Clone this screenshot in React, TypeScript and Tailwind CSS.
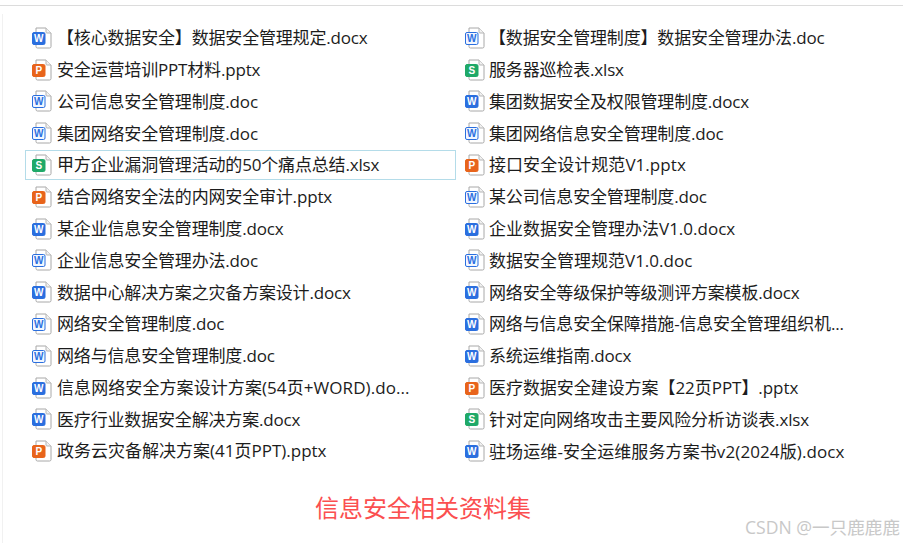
type Kind = "word" | "wordOutline" | "ppt" | "excel";
type Item = { name: string; kind: Kind; selected?: boolean; track?: string };

const left: Item[] = [
  { name: "【核心数据安全】数据安全管理规定.docx", kind: "word" },
  { name: "安全运营培训PPT材料.pptx", kind: "ppt" },
  { name: "公司信息安全管理制度.doc", kind: "wordOutline" },
  { name: "集团网络安全管理制度.doc", kind: "wordOutline" },
  { name: "甲方企业漏洞管理活动的50个痛点总结.xlsx", kind: "excel", selected: true },
  { name: "结合网络安全法的内网安全审计.pptx", kind: "ppt" },
  { name: "某企业信息安全管理制度.docx", kind: "word" },
  { name: "企业信息安全管理办法.doc", kind: "wordOutline" },
  { name: "数据中心解决方案之灾备方案设计.docx", kind: "word" },
  { name: "网络安全管理制度.doc", kind: "wordOutline" },
  { name: "网络与信息安全管理制度.doc", kind: "wordOutline" },
  { name: "信息网络安全方案设计方案(54页+WORD).do...", kind: "word", track: "tracking-[0.08px]" },
  { name: "医疗行业数据安全解决方案.docx", kind: "word" },
  { name: "政务云灾备解决方案(41页PPT).pptx", kind: "ppt", track: "tracking-normal" },
];

const right: Item[] = [
  { name: "【数据安全管理制度】数据安全管理办法.doc", kind: "wordOutline" },
  { name: "服务器巡检表.xlsx", kind: "excel" },
  { name: "集团数据安全及权限管理制度.docx", kind: "word" },
  { name: "集团网络信息安全管理制度.doc", kind: "wordOutline" },
  { name: "接口安全设计规范V1.pptx", kind: "ppt", track: "tracking-[0.05px]" },
  { name: "某公司信息安全管理制度.doc", kind: "wordOutline" },
  { name: "企业数据安全管理办法V1.0.docx", kind: "word", track: "tracking-normal" },
  { name: "数据安全管理规范V1.0.doc", kind: "wordOutline", track: "tracking-normal" },
  { name: "网络安全等级保护等级测评方案模板.docx", kind: "word" },
  { name: "网络与信息安全保障措施-信息安全管理组织机...", kind: "word" },
  { name: "系统运维指南.docx", kind: "word" },
  { name: "医疗数据安全建设方案【22页PPT】.pptx", kind: "ppt", track: "tracking-[-0.05px]" },
  { name: "针对定向网络攻击主要风险分析访谈表.xlsx", kind: "excel" },
  { name: "驻场运维-安全运维服务方案书v2(2024版).docx", kind: "word", track: "tracking-[0.1px]" },
];

function FileIcon({ kind }: { kind: Kind }) {
  const letter = kind === "ppt" ? "P" : kind === "excel" ? "S" : "W";
  const color = kind === "ppt" ? "#e8641b" : kind === "excel" ? "#1fa968" : "#2b6fdf";
  const outline = kind === "wordOutline";
  return (
    <svg width="20" height="22" viewBox="0 0 20 22" className="shrink-0">
      <path d="M4 1 H14 L19 6 V19.5 Q19 21 17.5 21 H5.5 Q4 21 4 19.5 Z" fill="#fff" stroke="#a8a8a8" strokeWidth="1" />
      <path d="M14 1 V5 Q14 6 15 6 H19" fill="#f1f1f1" stroke="#b5b5b5" strokeWidth="1" />
      <rect x="0.5" y="5.5" width="12.5" height="12" rx="1.5" fill={outline ? "#f2f7ff" : color} stroke={color} strokeWidth="1" />
      <text
        x="6.75"
        y="15.2"
        textAnchor="middle"
        fontSize="10"
        fontWeight="700"
        fontFamily="Liberation Sans, sans-serif"
        fill={outline ? color : "#fff"}
      >
        {letter}
      </text>
    </svg>
  );
}

function FileRow({ item, narrow }: { item: Item; narrow?: boolean }) {
  return (
    <div
      className={`flex items-center whitespace-nowrap pl-[6px] ${
        item.selected ? "my-[0.9px] h-[30px] border border-[#b4dce9]" : "h-[31.8px] border border-transparent"
      }`}
    >
      <FileIcon kind={item.kind} />
      <span className={`text-[17px] text-[#1c1c1c] ${narrow ? "ml-[4px]" : "ml-[5px]"} ${item.track ?? "tracking-[-0.17px]"}`}>
        {item.name}
      </span>
    </div>
  );
}

export default function App() {
  return (
    <div
      className="h-[543px] w-[903px] overflow-hidden bg-white"
      style={{ fontFamily: '"Open Sans", "Noto Sans CJK SC", sans-serif' }}
    >
      <div className="mt-[5px] h-px bg-[#dcdcdc]" />
      <div className="ml-[2px] mt-[8px] h-[529px] border-l border-[#f1f1f1] pl-[22px] pt-[8px]">
        <div className="grid grid-cols-[431px_1fr] gap-x-[2px]">
          <div className="flex flex-col">
            {left.map((item) => (
              <FileRow key={item.name} item={item} />
            ))}
          </div>
          <div className="flex flex-col">
            {right.map((item) => (
              <FileRow key={item.name} item={item} narrow />
            ))}
          </div>
        </div>
        <div className="relative mt-[24px] pl-[290px] text-[24px] leading-[34px] text-[#fb4f50]">
          信息安全相关资料集
          <span className="absolute right-[3px] top-[26px] text-[17.6px] leading-[20px] text-[#c8c8c8]">CSDN @一只鹿鹿鹿</span>
        </div>
      </div>
    </div>
  );
}
